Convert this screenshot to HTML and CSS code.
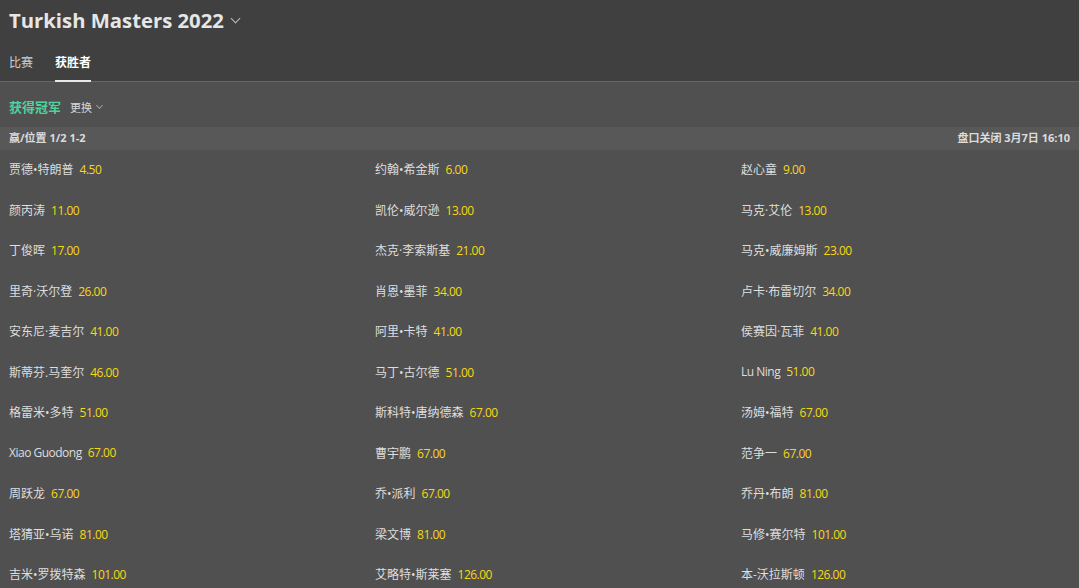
FILE: index.html
```html
<!DOCTYPE html>
<html lang="zh-CN">
<head>
  <meta charset="UTF-8" />
  <meta name="viewport" content="width=device-width, initial-scale=1.0" />
  <title>Turkish Masters 2022</title>
  <link rel="stylesheet" href="styles.css">
</head>
<body>
  <div class="header">
    <h1 class="title">Turkish Masters 2022 <span class="chev-big"></span></h1>
    <div class="tabs">
      <a href="#" class="tab">比赛</a>
      <a href="#" class="tab active">获胜者</a>
    </div>
  </div>

  <div class="market">
    <div class="market-title">
      <span class="market-name">获得冠军</span>
      <a href="#" class="switch">更换 <span class="chev-small"></span></a>
    </div>
    <div class="bar">
      <span>赢/位置 1/2 1-2</span>
      <span>盘口关闭 3月7日 16:10</span>
    </div>
    <div class="grid">
      <div class="cell"><span class="name">贾德•特朗普</span><span class="odds">4.50</span></div>
      <div class="cell"><span class="name">约翰•希金斯</span><span class="odds">6.00</span></div>
      <div class="cell"><span class="name">赵心童</span><span class="odds">9.00</span></div>

      <div class="cell"><span class="name">颜丙涛</span><span class="odds">11.00</span></div>
      <div class="cell"><span class="name">凯伦•威尔逊</span><span class="odds">13.00</span></div>
      <div class="cell"><span class="name">马克·艾伦</span><span class="odds">13.00</span></div>

      <div class="cell"><span class="name">丁俊晖</span><span class="odds">17.00</span></div>
      <div class="cell"><span class="name">杰克·李索斯基</span><span class="odds">21.00</span></div>
      <div class="cell"><span class="name">马克•威廉姆斯</span><span class="odds">23.00</span></div>

      <div class="cell"><span class="name">里奇·沃尔登</span><span class="odds">26.00</span></div>
      <div class="cell"><span class="name">肖恩•墨菲</span><span class="odds">34.00</span></div>
      <div class="cell"><span class="name">卢卡·布雷切尔</span><span class="odds">34.00</span></div>

      <div class="cell"><span class="name">安东尼·麦吉尔</span><span class="odds">41.00</span></div>
      <div class="cell"><span class="name">阿里•卡特</span><span class="odds">41.00</span></div>
      <div class="cell"><span class="name">侯赛因·瓦菲</span><span class="odds">41.00</span></div>

      <div class="cell"><span class="name">斯蒂芬.马奎尔</span><span class="odds">46.00</span></div>
      <div class="cell"><span class="name">马丁•古尔德</span><span class="odds">51.00</span></div>
      <div class="cell"><span class="name latin">Lu Ning</span><span class="odds">51.00</span></div>

      <div class="cell"><span class="name">格雷米•多特</span><span class="odds">51.00</span></div>
      <div class="cell"><span class="name">斯科特•唐纳德森</span><span class="odds">67.00</span></div>
      <div class="cell"><span class="name">汤姆•福特</span><span class="odds">67.00</span></div>

      <div class="cell"><span class="name latin">Xiao Guodong</span><span class="odds">67.00</span></div>
      <div class="cell"><span class="name">曹宇鹏</span><span class="odds">67.00</span></div>
      <div class="cell"><span class="name">范争一</span><span class="odds">67.00</span></div>

      <div class="cell"><span class="name">周跃龙</span><span class="odds">67.00</span></div>
      <div class="cell"><span class="name">乔•派利</span><span class="odds">67.00</span></div>
      <div class="cell"><span class="name">乔丹•布朗</span><span class="odds">81.00</span></div>

      <div class="cell"><span class="name">塔猜亚•乌诺</span><span class="odds">81.00</span></div>
      <div class="cell"><span class="name">梁文博</span><span class="odds">81.00</span></div>
      <div class="cell"><span class="name">马修•赛尔特</span><span class="odds">101.00</span></div>

      <div class="cell"><span class="name">吉米•罗拨特森</span><span class="odds">101.00</span></div>
      <div class="cell"><span class="name">艾略特•斯莱塞</span><span class="odds">126.00</span></div>
      <div class="cell"><span class="name">本-沃拉斯顿</span><span class="odds">126.00</span></div>
    </div>
  </div>
</body>
</html>
```

FILE: styles.css
```css
* {
  margin: 0;
  padding: 0;
  box-sizing: border-box;
}

body, html {
  height: 100%;
  overflow: hidden;
  font-family: "Open Sans", "Noto Sans CJK SC", sans-serif;
  background: #505050;
  color: #ddd;
}

a {
  text-decoration: none;
  color: inherit;
}

.header {
  background: #404040;
  border-bottom: 1px solid #3e7a63;
  padding: 0 9px;
}

.title {
  font-size: 20.3px;
  font-weight: bold;
  color: #e6e6e6;
  height: 41px;
  display: flex;
  align-items: center;
  gap: 8px;
  padding-bottom: 1px;
}

.chev-big {
  width: 7px;
  height: 7px;
  border-right: 1px solid #bbb;
  border-bottom: 1px solid #bbb;
  transform: rotate(45deg);
  margin-top: -3px;
}

.tabs {
  display: flex;
  gap: 22px;
  height: 40px;
}

.tab {
  font-size: 12px;
  color: #cfcfcf;
  display: flex;
  align-items: center;
  border-bottom: 2px solid transparent;
  margin-bottom: -1px;
  padding-top: 3px;
}

.tab.active {
  color: #fff;
  font-weight: bold;
  border-bottom-color: #e8e8e8;
}

.market-title {
  height: 45px;
  display: flex;
  align-items: center;
  padding: 4px 9px 0;
  gap: 9px;
}

.market-name {
  color: #4fd39e;
  font-weight: bold;
  font-size: 13px;
}

.switch {
  font-size: 11px;
  color: #d8d8d8;
  display: flex;
  align-items: center;
  gap: 5px;
}

.chev-small {
  width: 5px;
  height: 5px;
  border-right: 1px solid #999;
  border-bottom: 1px solid #999;
  transform: rotate(45deg);
  margin-top: -3px;
}

.bar {
  background: #585858;
  height: 23px;
  display: flex;
  justify-content: space-between;
  align-items: center;
  padding: 0 9px 3px;
  font-size: 11px;
  font-weight: bold;
  color: #dcdcdc;
}

.grid {
  display: grid;
  grid-template-columns: repeat(3, 366px);
  grid-auto-rows: 40.5px;
  align-items: center;
  padding-left: 9px;
  margin-top: -1px;
}

.cell {
  font-size: 12px;
  white-space: nowrap;
}

.name {
  color: #dedede;
  margin-right: 6px;
}

.name.latin {
  letter-spacing: -0.5px;
}

.odds {
  color: #f7d812;
  letter-spacing: -0.5px;
}
```
